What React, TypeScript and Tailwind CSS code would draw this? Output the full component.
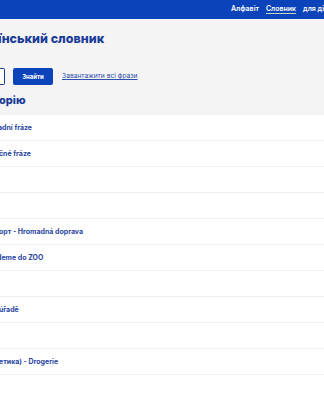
import React from "react"

const navItems = [
  { label: "Алфавіт", active: false },
  { label: "Словник", active: true },
  { label: "для дітей", active: false },
]

const rows = [
  { text: "adní fráze", shift: "-ml-[2px]" },
  { text: "čné fráze", shift: "-ml-[1px]" },
  { text: "", shift: "" },
  { text: "", shift: "" },
  { text: "орт - Hromadná doprava", shift: "-ml-[1px]" },
  { text: "deme do ZOO", shift: "-ml-[3px]" },
  { text: "", shift: "" },
  { text: "úřadě", shift: "-ml-[1px]" },
  { text: "", shift: "" },
  { text: "етика) - Drogerie", shift: "-ml-[1px]" },
  { text: "", shift: "" },
]

export default function App() {
  return (
    <div className="w-[324px] h-[400px] overflow-hidden bg-white font-['Inter','Noto_Sans',sans-serif]">
      {/* Top bar */}
      <header className="h-[19px] flex items-center bg-[#0b44ba] overflow-hidden whitespace-nowrap">
        <div className="w-[231px] shrink-0" />
        <nav className="flex items-center gap-[7px] text-[7px] font-semibold text-white">
          {navItems.map((item) => (
            <span
              key={item.label}
              className={item.active ? "underline decoration-[#b9dcc0] underline-offset-[2px]" : ""}
            >
              {item.label}
            </span>
          ))}
        </nav>
      </header>

      {/* Intro */}
      <section className="h-[96px] bg-[#f4f4f4] flex flex-col overflow-hidden whitespace-nowrap">
        <h1 className="mt-[11px] -ml-[2px] text-[12.5px] leading-[18px] font-extrabold text-[#1a3c98]">
          їнський словник
        </h1>
        <div className="mt-[20px] flex items-center h-[17px]">
          <div className="w-[5px] h-[17px] bg-white border border-[#1a3c98] rounded-r-[2px] border-l-0" />
          <button className="ml-[8px] w-[40px] h-[17px] rounded-[2px] bg-[#0b44ba] text-white text-[6px] font-bold">
            Знайти
          </button>
          <a className="ml-[9px] text-[6.7px] text-[#2f4eae] underline">Завантажити всі фрази</a>
        </div>
        <h2 className="mt-[7px] -ml-[1px] text-[11px] leading-[16px] font-extrabold text-[#1a3c98]">орію</h2>
      </section>

      {/* Categories */}
      <ul className="whitespace-nowrap">
        {rows.map((row, i) => (
          <li
            key={i}
            className="h-[26px] pt-[1px] flex items-center border-b border-[#efefef] text-[7px] font-bold text-[#2a469f]"
          >
            <span className={row.shift}>{row.text}</span>
          </li>
        ))}
      </ul>
    </div>
  )
}
